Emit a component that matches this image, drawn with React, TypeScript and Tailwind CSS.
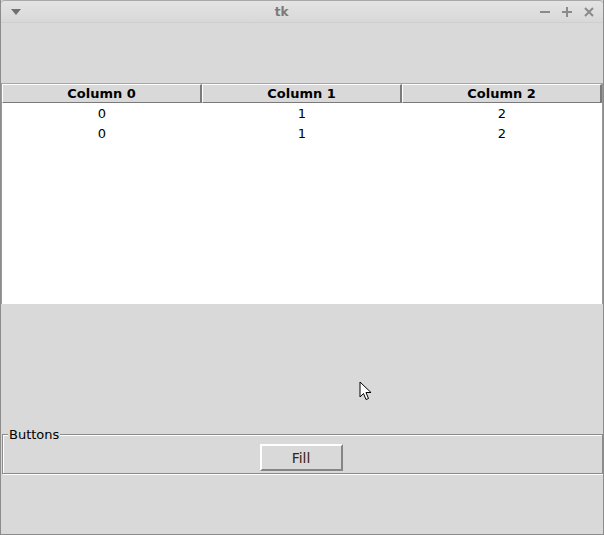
import React from "react";

export default function App() {
  const rows = [
    ["0", "1", "2"],
    ["0", "1", "2"],
  ];
  return (
    <div
      className="relative w-[604px] h-[535px] bg-[#d9d9d9] flex flex-col overflow-hidden border-l border-r border-b border-[#8c8c8c]"
      style={{ fontFamily: '"DejaVu Sans", sans-serif' }}
    >
      {/* title bar */}
      <div className="relative h-[23px] shrink-0 rounded-t-[4px] border-t border-[#a8a8a8] bg-gradient-to-b from-[#e4e4e4] to-[#d8d8d8] border-b border-b-[#cfcfcf] flex items-center">
        <svg width="10" height="6" viewBox="0 0 10 6" className="ml-[10px]">
          <polygon points="0,0 10,0 5,6" fill="#707070" />
        </svg>
        <div className="flex-1 text-center text-[12px] font-bold text-[#7a7a7a] pl-[2px]">tk</div>
        <div className="flex items-center gap-[12px] mr-[9px]">
          <svg width="10" height="10" viewBox="0 0 10 10">
            <rect x="0" y="4" width="10" height="2" fill="#8a8a8a" />
          </svg>
          <svg width="10" height="10" viewBox="0 0 10 10">
            <rect x="0" y="4" width="10" height="2" fill="#8a8a8a" />
            <rect x="4" y="0" width="2" height="10" fill="#8a8a8a" />
          </svg>
          <svg width="10" height="10" viewBox="0 0 10 10">
            <path d="M1 1 L9 9 M9 1 L1 9" stroke="#8a8a8a" strokeWidth="2" />
          </svg>
        </div>
      </div>

      {/* top spacer */}
      <div className="h-[60px] shrink-0" />

      {/* treeview */}
      <div className="h-[221px] shrink-0 flex flex-col border-t border-[#a6a6a6] border-l border-l-[#9a9a9a] border-r border-r-[#9a9a9a] bg-white">
        <div className="flex h-[19px] shrink-0 bg-[#d9d9d9]">
          {["Column 0", "Column 1", "Column 2"].map((c) => (
            <div
              key={c}
              className="w-[200px] flex items-center justify-center border-t border-l border-white border-r-2 border-b border-r-[#7a7a7a] border-b-[#7a7a7a] text-[13px] font-bold text-black leading-none"
            >
              {c}
            </div>
          ))}
        </div>
        {rows.map((r, i) => (
          <div key={i} className="flex h-[20px]">
            {r.map((v, j) => (
              <div key={j} className="w-[200px] flex items-center justify-center text-[13px] text-black leading-none">
                {v}
              </div>
            ))}
          </div>
        ))}
      </div>

      {/* middle spacer */}
      <div className="h-[123px] shrink-0" />

      {/* labelframe */}
      <div className="relative ml-[1px] h-[47px] shrink-0">
        <div className="absolute left-0 right-0 top-[7px] bottom-0 border border-[#8a8a8a]">
          <div className="absolute inset-0 border border-white border-r-0 border-b-0" />
          <div className="absolute -right-[2px] top-0 bottom-[-2px] w-[1px] bg-white" />
          <div className="absolute left-0 right-[-2px] -bottom-[2px] h-[1px] bg-white" />
        </div>
        <div className="absolute left-[6px] top-0 bg-[#d9d9d9] px-[1px] text-[13px] leading-[15px] text-black">
          Buttons
        </div>
        <div className="absolute left-0 right-0 top-[17px] flex justify-center">
          <div className="mr-[3px] w-[83px] h-[27px] flex items-center justify-center border-t-2 border-l-2 border-white border-r-2 border-b-2 border-r-[#858585] border-b-[#858585] bg-[#d9d9d9] text-[14px] text-[#3a2410] leading-none">
            Fill
          </div>
        </div>
      </div>

      <div className="flex-1" />

      {/* mouse cursor */}
      <svg
        className="absolute left-[358px] top-[381px]"
        width="14"
        height="21"
        viewBox="0 0 14 21"
      >
        <path d="M1 1 L1 16 L4.5 12.5 L7 18.5 L9.5 17.5 L7 11.5 L12 11.5 Z" fill="white" stroke="black" strokeWidth="1" strokeLinejoin="miter" />
      </svg>
    </div>
  );
}
